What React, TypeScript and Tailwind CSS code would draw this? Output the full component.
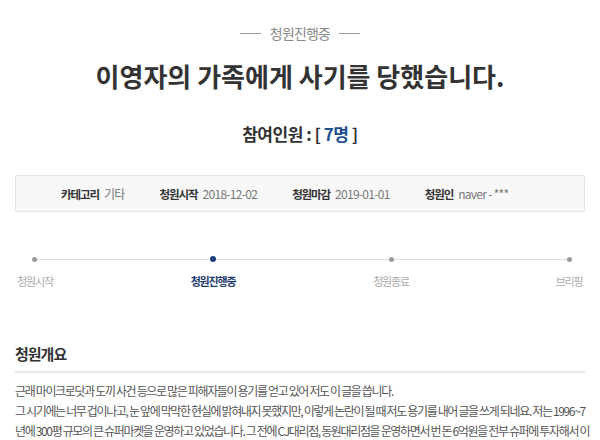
import React from "react";

const font = "font-['Noto_Sans_CJK_KR','Noto_Sans',sans-serif]";

function Dot({ active }: { active?: boolean }) {
  return (
    <div
      className={
        active
          ? "w-[6px] h-[6px] rounded-full bg-[#1d3f7a] shrink-0"
          : "w-[5px] h-[5px] rounded-full bg-[#9a9a9a] shrink-0"
      }
    />
  );
}

function Label({ text, active }: { text: string; active?: boolean }) {
  return (
    <div className="w-[6px] flex justify-center">
      <span
        className={
          active
            ? "whitespace-nowrap text-[11px] leading-[16px] tracking-[-1.2px] font-bold text-[#1f3c6d]"
            : "whitespace-nowrap text-[11px] leading-[16px] tracking-[-1.2px] text-[#aaaaaa]"
        }
      >
        {text}
      </span>
    </div>
  );
}

function Info({ label, value }: { label: string; value: string }) {
  return (
    <div className="flex items-center gap-[5px] whitespace-nowrap">
      <span className="font-bold text-[11.5px] text-[#333] tracking-[-1.1px]">{label}</span>
      <span className="text-[12px] text-[#777] tracking-[-0.7px]">{value}</span>
    </div>
  );
}

export default function App() {
  return (
    <div className={`${font} w-[600px] h-[440px] overflow-hidden bg-white`}>
      <div className="px-[15px] pt-[24px]">
        <div className="flex items-center justify-center gap-[9px] h-[18px]">
          <div className="w-[21px] h-px bg-[#999]" />
          <span className="text-[14px] leading-[18px] text-[#888] tracking-[-0.8px]">청원진행중</span>
          <div className="w-[21px] h-px bg-[#999]" />
        </div>
        <h1 className="mt-[17px] text-center text-[26px] leading-[34px] font-bold text-[#333]">
          이영자의 가족에게 사기를 당했습니다.
        </h1>
        <div className="mt-[30px] text-center text-[17px] leading-[22px] font-bold text-[#333] tracking-[-0.5px]">
          참여인원 : [ <span className="text-[#1d4f91]">7명</span> ]
        </div>
        <div className="mt-[30px] h-[37px] border border-[#e2e2e2] bg-[#f8f8f8] rounded-[2px] flex items-center pl-[45px] gap-[35px] leading-[16px]">
          <Info label="카테고리" value="기타" />
          <Info label="청원시작" value="2018-12-02" />
          <Info label="청원마감" value="2019-01-01" />
          <Info label="청원인" value="naver - ***" />
        </div>
        <div className="mt-[44px] ml-[17px] mr-[13px]">
          <div className="flex items-center">
            <Dot />
            <div className="flex-1 h-px bg-[#dddddd]" />
            <Dot active />
            <div className="flex-1 h-px bg-[#dddddd]" />
            <Dot />
            <div className="flex-1 h-px bg-[#dddddd]" />
            <Dot />
          </div>
          <div className="mt-[11px] flex justify-between">
            <Label text="청원시작" />
            <Label text="청원진행중" active />
            <Label text="청원종료" />
            <Label text="브리핑" />
          </div>
        </div>
        <h2 className="mt-[55px] pb-[7px] border-b-2 border-[#e8e8e8] text-[15px] leading-[20px] font-bold text-[#333] tracking-[-1px]">
          청원개요
        </h2>
        <div className="mt-[8px] text-[12px] leading-[20px] text-[#555] tracking-[-1.35px] whitespace-nowrap">
          <div>근래 마이크로닷과 도끼 사건 등으로 많은 피해자들이 용기를 얻고 있어 저도 이 글을 씁니다.</div>
          <div>그 시기에는 너무 겁이나고, 눈 앞에 막막한 현실에 밝혀내지 못했지만, 이렇게 논란이 될 때 저도 용기를 내어 글을 쓰게 되네요. 저는 1996~7</div>
          <div>년에 300평 규모의 큰 슈퍼마켓을 운영하고 있었습니다. 그 전에 CJ대리점, 동원대리점을 운영하면서 번 돈 6억원을 전부 슈퍼에 투자해서 이</div>
        </div>
      </div>
    </div>
  );
}
